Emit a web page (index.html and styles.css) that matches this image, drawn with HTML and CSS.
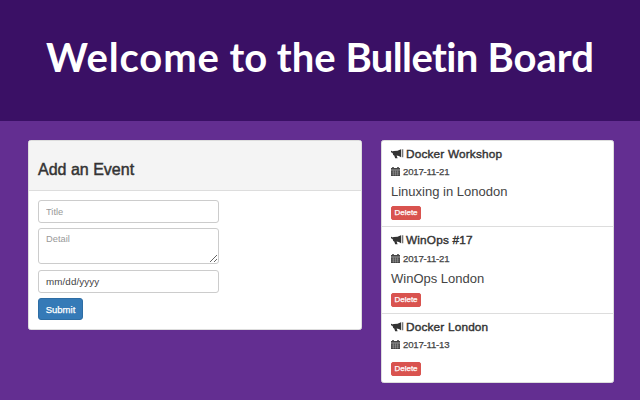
FILE: index.html
```html
<!DOCTYPE html>
<html lang="en">
<head>
<meta charset="utf-8">
<title>Bulletin Board</title>
<link rel="stylesheet" href="styles.css">
</head>
<body>
<svg width="0" height="0" class="sprite" aria-hidden="true">
  <symbol id="horn" viewBox="0 0 13 10">
    <path d="M0 2 L1 1.800 L1.600 2.500 L2.600 2.100 Q6.500 2.200 10 .2 V8.200 Q8 6.900 5.600 6.500 L6.600 9.200 H4.200 L3.200 6.400 L2.200 6.100 L1.600 4 L0 3.200Z"/>
    <path class="bell" d="M10.700 .3 H12.300 V8.300 H10.700Z"/>
  </symbol>
  <symbol id="calendar" viewBox="0 0 9 9">
    <path d="M0 1 H1.200 V0 H2.800 V1 H6.200 V0 H7.800 V1 H9 V2.700 H0Z M0 3.300 H9 V9 H0Z"/>
    <path class="grid" d="M.5 5.100 H8.500 M.5 7.100 H8.500 M2.400 3.500 V8.600 M4.500 3.500 V8.600 M6.600 3.500 V8.600"/>
  </symbol>
</svg>
<header class="banner"><h1><span class="loose">Welcome</span> to the <span class="tight">Bulletin</span> Board</h1></header>
<main class="content">
  <section class="panel form-panel">
    <div class="panel-heading"><h2>Add an Event</h2></div>
    <form class="panel-body">
      <input class="control" placeholder="Title">
      <textarea class="control detail" placeholder="Detail"></textarea>
      <input class="control date-input" value="mm/dd/yyyy">
      <button class="submit" type="button">Submit</button>
    </form>
  </section>
  <section class="panel events">
    <article class="event">
      <h3><svg class="horn"><use href="#horn"/></svg><span>Docker Workshop</span></h3>
      <h4><svg class="calendar"><use href="#calendar"/></svg><span>2017-11-21</span></h4>
      <p>Linuxing in Lonodon</p>
      <button class="delete" type="button">Delete</button>
    </article>
    <article class="event middle">
      <h3><svg class="horn"><use href="#horn"/></svg><span>WinOps #17</span></h3>
      <h4><svg class="calendar"><use href="#calendar"/></svg><span>2017-11-21</span></h4>
      <p>WinOps London</p>
      <button class="delete" type="button">Delete</button>
    </article>
    <article class="event last">
      <h3><svg class="horn"><use href="#horn"/></svg><span>Docker London</span></h3>
      <h4><svg class="calendar"><use href="#calendar"/></svg><span>2017-11-13</span></h4>
      <button class="delete" type="button">Delete</button>
    </article>
  </section>
</main>
</body>
</html>
```
FILE: styles.css
```css
* { box-sizing: border-box; }
body {
  margin: 0;
  height: 400px;
  overflow: hidden;
  background: #632e91;
  color: #333;
  font-family: "Liberation Sans", Arial, sans-serif;
}
h1, h2, h3, h4, p { margin: 0; }
.sprite { display: block; }
.banner {
  height: 121px;
  padding-top: 33px;
  background: #3a1065;
  color: #fff;
  text-align: center;
}
h1 {
  font: 700 40px/48px Lato, sans-serif;
  font-variant-ligatures: none;
  white-space: nowrap;
}
.loose { letter-spacing: .85px; }
.tight { letter-spacing: -.6px; }
.content {
  display: flex;
  align-items: flex-start;
  gap: 19px;
  padding: 19px 26px 0 28px;
}
.panel {
  background: #fff;
  border: 1px solid #ddd;
  border-radius: 2.5px;
  overflow: hidden;
}
.form-panel { width: 334px; height: 190px; }
.panel-heading {
  height: 50px;
  padding: 19px 9px 0;
  background: #f4f4f4;
  border-bottom: 1px solid #ddd;
}
h2 {
  font-size: 16px;
  line-height: 20px;
  font-weight: 400;
  -webkit-text-stroke: .45px;
}
.panel-body {
  display: flex;
  flex-direction: column;
  align-items: flex-start;
  padding: 9px;
}
.control {
  display: block;
  width: 181px;
  height: 23px;
  margin: 0 0 5px;
  padding: 0 7px;
  border: 1px solid #ccc;
  border-radius: 3px;
  background: #fff;
  color: #444;
  font: 9.3px/13px "Liberation Sans", Arial, sans-serif;
  outline: none;
}
.control::placeholder { color: #999; }
.detail { height: 36px; padding-top: 4px; margin-bottom: 6px; }
.date-input { font-size: 9.8px; letter-spacing: .1px; }
.submit, .delete {
  border: 1px solid #2e6da4;
  border-radius: 3px;
  background: #357ab7;
  color: #fff;
  font-family: "Liberation Sans", Arial, sans-serif;
  padding: 0;
  -webkit-text-stroke: .25px;
}
.submit { width: 45px; height: 22px; font-size: 9.5px; }
.events { width: 233px; height: 243px; }
.event {
  height: 86px;
  padding: 5px 9px 0;
  border-bottom: 1px solid #ddd;
}
.event.middle { height: 87px; }
.event.last { border-bottom: 0; height: 69px; }
h3, h4 { display: flex; font-weight: 400; }
h3 {
  height: 16px;
  gap: 2px;
  font-size: 11.8px;
  letter-spacing: .18px;
  line-height: 16px;
  -webkit-text-stroke: .4px;
}
h4 {
  height: 14px;
  margin-top: 3px;
  gap: 3px;
  color: #444;
  font-size: 9.6px;
  letter-spacing: -.2px;
  line-height: 14px;
  -webkit-text-stroke: .25px;
}
.middle h4 { margin-top: 4px; }
.event p {
  height: 20px;
  margin-top: 3px;
  color: #444;
  font-size: 13px;
  line-height: 20px;
}
.horn, .calendar { flex: none; fill: currentColor; -webkit-text-stroke: 0; }
.horn { width: 13px; height: 10px; margin-top: 3px; }
.calendar { width: 9px; height: 9px; margin-top: 2px; }
.bell { fill: #777; }
.grid { fill: none; stroke: #bbb; stroke-width: .4; }
.delete {
  display: block;
  width: 30px;
  height: 14px;
  margin-top: 4px;
  border-color: #d9534f;
  border-radius: 2px;
  background: #d9534f;
  font-size: 8px;
  line-height: 12px;
}
.event.last .delete { margin-top: 10px; }
```
